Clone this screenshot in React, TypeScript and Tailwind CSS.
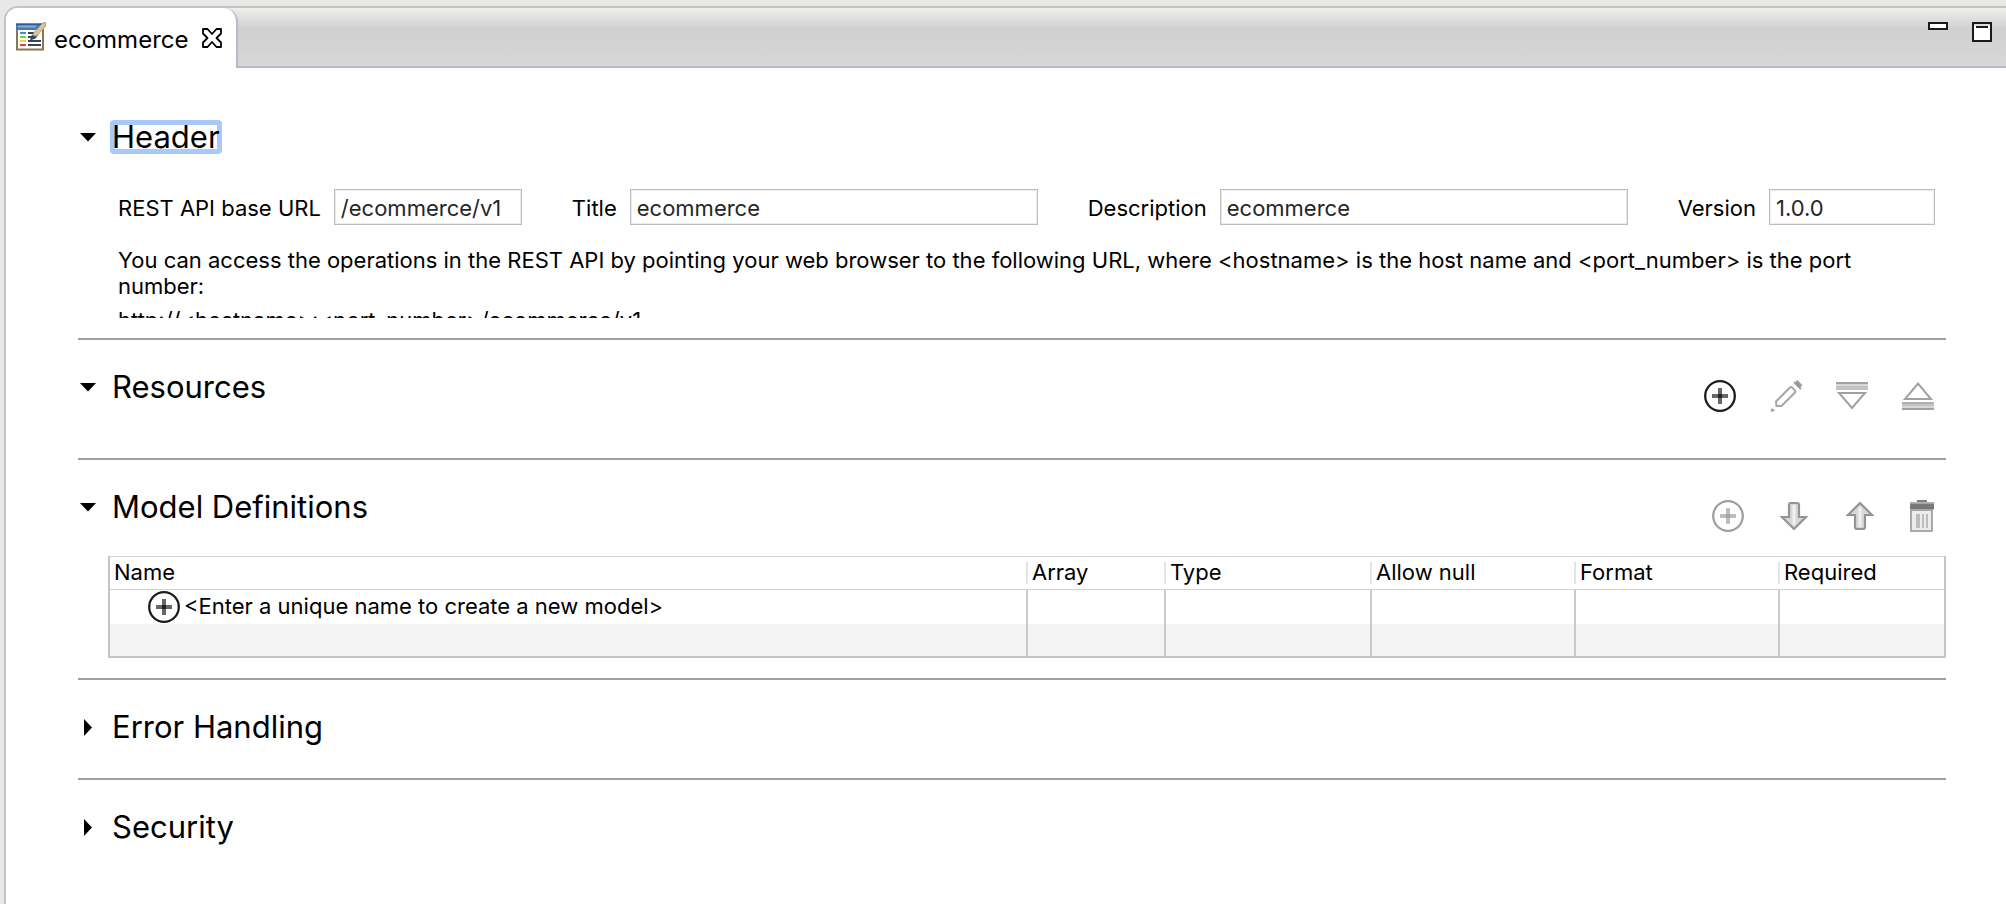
import { useState, type ReactNode } from 'react';

function EditorIcon() {
  return (
    <svg width="30" height="29" viewBox="0 0 30 29" aria-hidden="true">
      <rect x="1" y="3" width="26" height="24.5" fill="#fff" stroke="#8c7550" strokeWidth="2" />
      <rect x="0" y="1.5" width="28" height="6.5" fill="#4a78b4" />
      <rect x="0" y="1.5" width="28" height="1.5" fill="#2f5c98" />
      <rect x="2" y="3.5" width="18" height="2" fill="#86aad6" />
      <g>
        <rect x="4" y="10" width="6" height="2" fill="#3f8cf0" />
        <rect x="4" y="14" width="6" height="2" fill="#5fe04e" />
        <rect x="4" y="18" width="6" height="2" fill="#f5d33c" />
        <rect x="4" y="22" width="6" height="2" fill="#ea3b30" />
      </g>
      <g fill="#3b4352">
        <rect x="12" y="10" width="8" height="2" />
        <rect x="12" y="14" width="6" height="2" />
        <rect x="12" y="18" width="13" height="2" />
        <rect x="12" y="22" width="13" height="2" />
      </g>
      <path d="M14 18.5 L15.5 13.5 L19 10.5 L22 13.5 L19.5 16.5 Z" fill="#33445f" />
      <path d="M18 10.5 L27.5 0.5 L29.5 0.5 L29.5 4.5 L20.5 14 L17 13.5 Z" fill="#dcc294" stroke="#bf9f6c" strokeWidth="1" />
    </svg>
  );
}

function CloseIcon() {
  return (
    <svg width="20" height="20" viewBox="0 0 20 20" aria-hidden="true">
      <path
        d="M1 1 H5.5 L10 6 L14.5 1 H19 V5.5 L14.5 10 L19 14.5 V19 H14.5 L10 14 L5.5 19 H1 V14.5 L5.5 10 L1 5.5 Z"
        fill="#fff"
        stroke="#000"
        strokeWidth="1.8"
        strokeLinejoin="round"
      />
    </svg>
  );
}

function MinimizeIcon() {
  return (
    <svg width="20" height="20" viewBox="0 0 20 20" aria-hidden="true">
      <rect x="1" y="1" width="18" height="6" fill="#fff" stroke="#1a1a1a" strokeWidth="2" />
    </svg>
  );
}

function MaximizeIcon() {
  return (
    <svg width="20" height="20" viewBox="0 0 20 20" aria-hidden="true">
      <rect x="1" y="1" width="18" height="18" fill="#fff" stroke="#1a1a1a" strokeWidth="2" />
      <rect x="2" y="2" width="16" height="2" fill="#dcdcdc" />
      <rect x="4" y="4" width="12" height="2" fill="#1a1a1a" />
    </svg>
  );
}

function PlusCircleIcon({ dim = false }: { dim?: boolean }) {
  return (
    <svg width="32" height="32" viewBox="0 0 32 32" aria-hidden="true">
      <circle cx="16" cy="16" r="14.8" fill="#fff" stroke={dim ? '#a0a0a0' : '#1c1c1c'} strokeWidth="2.3" />
      <path d="M16 8 V24 M8 16 H24" stroke={dim ? '#bdbdbd' : '#686868'} strokeWidth="4" />
      <rect x="14" y="14" width="4" height="4" fill={dim ? '#a6a6a6' : '#222'} />
    </svg>
  );
}

function PencilIcon() {
  return (
    <svg width="32" height="32" viewBox="0 0 32 32" aria-hidden="true">
      <path d="M6 21.5 L20 7.5 Q21 6.5 22 7.5 L25 10.5 Q26 11.5 25 12.5 L11.5 26 L6.5 26 Z" fill="#fff" stroke="#a6a6a6" strokeWidth="2" />
      <path d="M24.5 3.5 L26.5 1.5 L31 6 L29.5 8.5 Z" fill="#8c8c8c" />
      <path d="M24 2 L31 9 M26.5 0.5 L32 6" stroke="#9c9c9c" strokeWidth="1.8" />
      <path d="M0.5 32 L1.5 28 L5.5 30.5 Z" fill="#a4a4a4" />
    </svg>
  );
}

function ExpandIcon() {
  return (
    <svg width="32" height="32" viewBox="0 0 32 32" aria-hidden="true">
      <rect x="0" y="2" width="32" height="8" fill="#c4c4c4" />
      <rect x="0" y="2" width="32" height="2" fill="#a2a2a2" />
      <rect x="0" y="4" width="32" height="2" fill="#d8d8d8" />
      <path d="M3 13 H29 L16 28 Z" fill="#fff" stroke="#a0a0a0" strokeWidth="2" />
    </svg>
  );
}

function CollapseIcon() {
  return (
    <svg width="32" height="32" viewBox="0 0 32 32" aria-hidden="true">
      <path d="M3 19 H29 L16 3.5 Z" fill="#fff" stroke="#a0a0a0" strokeWidth="2" />
      <rect x="0" y="22" width="32" height="8" fill="#c4c4c4" />
      <rect x="0" y="22" width="32" height="2" fill="#b0b0b0" />
      <rect x="0" y="26" width="32" height="2" fill="#d8d8d8" />
      <rect x="0" y="28" width="32" height="2" fill="#a0a0a0" />
    </svg>
  );
}

function ArrowIcon({ up = false }: { up?: boolean }) {
  return (
    <svg width="32" height="32" viewBox="0 0 32 32" aria-hidden="true">
      <g transform={up ? 'rotate(180 16 16)' : undefined}>
        <path
          d="M11 5 Q11 3 13 3 H19 Q21 3 21 5 V17 H28 L16 29 L4 17 H11 Z"
          fill="#d8d8d8"
          stroke="#949494"
          strokeWidth="2.2"
        />
        <path d="M16 5 V25" stroke="#f0f0f0" strokeWidth="3" />
      </g>
    </svg>
  );
}

function TrashIcon() {
  return (
    <svg width="24" height="32" viewBox="0 0 24 32" aria-hidden="true">
      <rect x="7" y="0" width="10" height="2" fill="#808080" />
      <rect x="0" y="2.5" width="24" height="7" fill="#787878" />
      <rect x="0" y="2.5" width="24" height="1.6" fill="#a6a6a6" />
      <rect x="1" y="10" width="21" height="21" fill="#ececec" stroke="#a2a2a2" strokeWidth="1.8" />
      <rect x="6" y="14" width="4" height="14" fill="#bcbcbc" />
      <rect x="12" y="14" width="2" height="14" fill="#bcbcbc" />
      <rect x="16" y="14" width="2" height="14" fill="#bcbcbc" />
    </svg>
  );
}

function Twistie({ open }: { open: boolean }) {
  return (
    <svg width="20" height="20" viewBox="0 0 20 20" aria-hidden="true">
      {open ? <path d="M2 6 H18 L10 14.5 Z" /> : <path d="M6 2 L14 10.5 L6 19 Z" />}
    </svg>
  );
}

interface SectionProps {
  title: string;
  initiallyOpen?: boolean;
  focused?: boolean;
  tools?: ReactNode;
  children?: ReactNode;
  headClass?: string;
}

function Section({ title, initiallyOpen = false, focused = false, tools, children, headClass = 'pt-[30px]' }: SectionProps) {
  const [open, setOpen] = useState(initiallyOpen);
  return (
    <section>
      <div className={`flex items-start justify-between ${headClass}`}>
        <h2>
          <button type="button" aria-expanded={open} onClick={() => setOpen(!open)} className="flex items-center gap-3 outline-none">
            <Twistie open={open} />
            <span
              className={`rounded px-0.5 text-[31px] leading-[34px] ${focused ? 'shadow-[inset_0_0_0_5px_#a9c9fb]' : ''}`}
            >
              {title}
            </span>
          </button>
        </h2>
        {tools && <div className="flex gap-[34px] pt-[10px] pr-3">{tools}</div>}
      </div>
      {open && children}
    </section>
  );
}

function Tool({ label, children }: { label: string; children: ReactNode }) {
  return (
    <button type="button" aria-label={label}>
      {children}
    </button>
  );
}

interface FieldProps {
  id: string;
  label: string;
  value: string;
  boxClass: string;
  inputClass: string;
}

function Field({ id, label, value, boxClass, inputClass }: FieldProps) {
  return (
    <div className={`flex items-center gap-[13px] ${boxClass}`}>
      <label htmlFor={id} className="pt-0.5 whitespace-nowrap">
        {label}
      </label>
      <input
        id={id}
        type="text"
        defaultValue={value}
        className={`h-9 border border-[#bdbdbd] bg-white px-[6px] pt-0.5 text-[#262626] shadow-[inset_0_0_0_1px_#ececec] outline-none ${inputClass}`}
      />
    </div>
  );
}

const columns = [
  { name: 'Array', width: 'w-[138px]' },
  { name: 'Type', width: 'w-[206px]' },
  { name: 'Allow null', width: 'w-[204px]' },
  { name: 'Format', width: 'w-[204px]' },
  { name: 'Required', width: 'w-[166px]' },
];

function ModelTable() {
  return (
    <table className="w-full table-fixed border-separate border-spacing-0 border-2 border-t border-[#c4c4c4] border-t-[#d2d2d2] text-left">
      <thead>
        <tr className="h-[33px]">
          <th className="border-b border-[#d2d2d2] px-1 pt-0 pb-0.5 font-normal">Name</th>
          {columns.map((c) => (
            <th key={c.name} className={`border-b border-[#d2d2d2] p-0 font-normal ${c.width}`}>
              <div className="border-l-2 border-[#e4e4e4] pb-0.5 pl-1 leading-5">{c.name}</div>
            </th>
          ))}
        </tr>
      </thead>
      <tbody>
        <tr className="h-[34px]">
          <td className="p-0">
            <div className="flex items-center gap-1 pl-[38px]">
              <PlusCircleIcon />
              <span className="pb-0.5">&lt;Enter a unique name to create a new model&gt;</span>
            </div>
          </td>
          {columns.map((c) => (
            <td key={c.name} className="border-l-2 border-[#cacaca] p-0" />
          ))}
        </tr>
        <tr className="h-8 bg-[#f4f4f4]">
          <td className="p-0" />
          {columns.map((c) => (
            <td key={c.name} className="border-l-2 border-[#cacaca] p-0" />
          ))}
        </tr>
      </tbody>
    </table>
  );
}

function Divider() {
  return <hr className="border-0 border-t-2 border-[#9f9f9f]" />;
}

export default function App() {
  return (
    <div className="flex min-h-screen flex-col bg-[#e8e8e8] pt-[6px] pl-1 font-[Inter,sans-serif] text-[22px] leading-[26px] text-black">
      <div className="flex grow flex-col overflow-hidden rounded-tl-[14px] border-t-2 border-l-2 border-[#c3c3bf] bg-white">
        <header className="flex h-[60px] bg-linear-to-b from-[#efefec] via-[#d0d0d0] via-35% to-[#d8d8d8]">
          <div className="flex items-center gap-2 rounded-tr-[14px] border-r-2 border-[#b5bbcb] bg-white pr-[14px] pb-1 pl-[10px]">
            <EditorIcon />
            <span className="pt-2 pr-1.5 text-2xl leading-7">ecommerce</span>
            <button type="button" aria-label="Close" className="pt-1">
              <CloseIcon />
            </button>
          </div>
          <div className="flex grow items-start justify-end gap-6 border-b-2 border-[#b5bbcb] pt-[14px] pr-[14px]">
            <button type="button" aria-label="Minimize">
              <MinimizeIcon />
            </button>
            <button type="button" aria-label="Maximize">
              <MaximizeIcon />
            </button>
          </div>
        </header>

        <main className="pr-[60px] pl-[72px]">
          <Section title="Header" initiallyOpen focused headClass="pt-[52px]">
            <div className="pt-[35px] pr-[11px] pb-5 pl-10">
              <div className="flex gap-[50px]">
                <Field id="base-url" label="REST API base URL" value="/ecommerce/v1" boxClass="" inputClass="w-[188px]" />
                <Field id="title" label="Title" value="ecommerce" boxClass="grow" inputClass="w-0 grow" />
                <Field id="description" label="Description" value="ecommerce" boxClass="grow" inputClass="w-0 grow" />
                <Field id="version" label="Version" value="1.0.0" boxClass="" inputClass="w-[166px]" />
              </div>
              <div className="mt-[22px] h-[71px] overflow-hidden">
                <p>
                  You can access the operations in the REST API by pointing your web browser to the following URL, where
                  &lt;hostname&gt; is the host name and &lt;port_number&gt; is the port number:
                </p>
                <p className="mt-2">http://&lt;hostname&gt;:&lt;port_number&gt;/ecommerce/v1</p>
              </div>
            </div>
          </Section>
          <Divider />

          <Section
            title="Resources"
            initiallyOpen
            tools={
              <>
                <Tool label="Create resource"><PlusCircleIcon /></Tool>
                <Tool label="Edit resource"><PencilIcon /></Tool>
                <Tool label="Expand all"><ExpandIcon /></Tool>
                <Tool label="Collapse all"><CollapseIcon /></Tool>
              </>
            }
          >
            <div className="h-[46px]" />
          </Section>
          <Divider />

          <Section
            title="Model Definitions"
            initiallyOpen
            tools={
              <>
                <Tool label="Add model"><PlusCircleIcon dim /></Tool>
                <Tool label="Move down"><ArrowIcon /></Tool>
                <Tool label="Move up"><ArrowIcon up /></Tool>
                <Tool label="Delete model"><TrashIcon /></Tool>
              </>
            }
          >
            <div className="pt-6 pb-5 pl-[30px]">
              <ModelTable />
            </div>
          </Section>
          <Divider />

          <div className="pb-[34px]">
            <Section title="Error Handling" />
          </div>
          <Divider />

          <div className="pb-[34px]">
            <Section title="Security" />
          </div>
        </main>
      </div>
    </div>
  );
}
